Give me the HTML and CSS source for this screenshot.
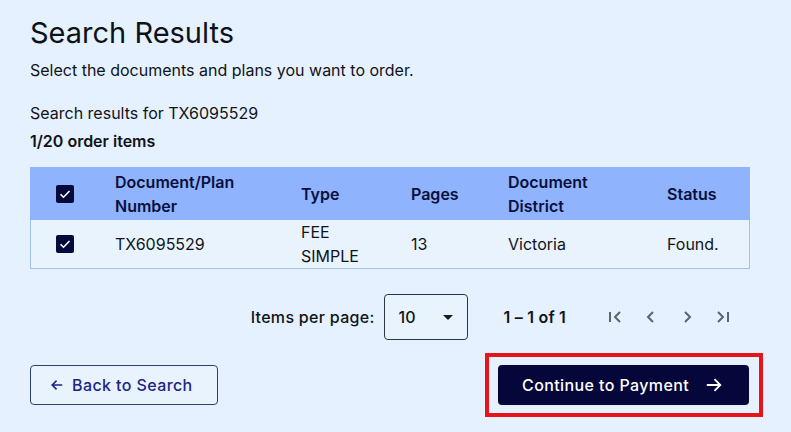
FILE: index.html
```html
<!DOCTYPE html>
<html lang="en">
<head>
    <meta charset="UTF-8">
    <meta name="viewport" content="width=device-width, initial-scale=1.0">
    <title>Search Results</title>
    <link rel="stylesheet" href="styles.css">
</head>
<body>

    <div class="page">
        <h1 class="title">Search Results</h1>
        <p class="intro">Select the documents and plans you want to order.</p>

        <p class="query">Search results for TX6095529</p>
        <p class="count">1/20 order items</p>

        <div class="results">
            <div class="row head">
                <div class="cell check"><span class="box"><svg viewBox="0 0 18 18" width="18" height="18"><path d="M4.5 9.2l3 3 6-6.2" fill="none" stroke="#fff" stroke-width="1.6"/></svg></span></div>
                <div class="cell">Document/Plan<br>Number</div>
                <div class="cell">Type</div>
                <div class="cell">Pages</div>
                <div class="cell">Document<br>District</div>
                <div class="cell">Status</div>
            </div>
            <div class="row item">
                <div class="cell check"><span class="box"><svg viewBox="0 0 18 18" width="18" height="18"><path d="M4.5 9.2l3 3 6-6.2" fill="none" stroke="#fff" stroke-width="1.6"/></svg></span></div>
                <div class="cell">TX6095529</div>
                <div class="cell">FEE<br>SIMPLE</div>
                <div class="cell">13</div>
                <div class="cell">Victoria</div>
                <div class="cell">Found.</div>
            </div>
        </div>

        <div class="paginator">
            <span class="per-page">Items per page:</span>
            <div class="select">
                <span>10</span>
                <svg viewBox="0 0 10 5" width="10" height="5"><path d="M0 0h10L5 5z" fill="#1a1a1a"/></svg>
            </div>
            <span class="range">1 – 1 of 1</span>
            <div class="pager">
                <svg viewBox="0 0 24 24" width="24" height="24"><path d="M7 7v10M17 7l-5 5 5 5" fill="none" stroke="#5d6470" stroke-width="2"/></svg>
                <svg viewBox="0 0 24 24" width="24" height="24"><path d="M14 7l-5 5 5 5" fill="none" stroke="#5d6470" stroke-width="2"/></svg>
                <svg viewBox="0 0 24 24" width="24" height="24"><path d="M10 7l5 5-5 5" fill="none" stroke="#5d6470" stroke-width="2"/></svg>
                <svg viewBox="0 0 24 24" width="24" height="24"><path d="M17 7v10M7 7l5 5-5 5" fill="none" stroke="#5d6470" stroke-width="2"/></svg>
            </div>
        </div>

        <div class="actions">
            <button class="btn back">
                <svg viewBox="0 0 16 16" width="14" height="14"><path d="M14 8H2.5M7.5 3L2.5 8l5 5" fill="none" stroke="#1d2484" stroke-width="1.8"/></svg>
                Back to Search
            </button>
            <div class="focus-ring">
                <button class="btn next">
                    Continue to Payment
                    <svg viewBox="0 0 20 20" width="18" height="18"><path d="M2 10h15M10.5 3.5L17 10l-6.5 6.5" fill="none" stroke="#fff" stroke-width="2"/></svg>
                </button>
            </div>
        </div>
    </div>

</body>
</html>
```

FILE: styles.css
```css
* {
    margin: 0;
    padding: 0;
    box-sizing: border-box;
}

body {
    font-family: 'Inter', 'Noto Sans', sans-serif;
    background-color: #e5f1fe;
    color: #111318;
    width: 791px;
    height: 432px;
    overflow: hidden;
}

.page {
    padding: 14px 41px 0 30px;
}

.title {
    font-size: 29px;
    font-weight: 400;
    line-height: 38px;
    color: #0e1118;
}

.intro {
    font-size: 16px;
    line-height: 22px;
    margin-top: 7px;
}

.query {
    font-size: 16px;
    line-height: 22px;
    margin-top: 21px;
}

.count {
    font-size: 16px;
    font-weight: 600;
    line-height: 22px;
    margin-top: 6px;
}

.results {
    margin-top: 15px;
    border: 1px solid #9fc2ec;
    border-top: none;
}

.row {
    display: grid;
    grid-template-columns: 68px 186px 110px 97px 159px 1fr;
    align-items: center;
}

.head {
    background-color: #8fb3fd;
    height: 53px;
    color: #0b0f3c;
    font-weight: 600;
    margin: 0 -1px;
    padding: 0 1px;
}

.item {
    background-color: #e8f3fe;
    height: 48px;
}

.cell {
    font-size: 16px;
    line-height: 24px;
    padding-left: 16px;
}

.check {
    padding-left: 25px;
}

.box {
    display: block;
    width: 18px;
    height: 18px;
    background-color: #07093a;
    border-radius: 2px;
}

.box svg {
    display: block;
}

.paginator {
    display: flex;
    align-items: center;
    justify-content: flex-end;
    margin-top: 25px;
    font-size: 16px;
    height: 46px;
}

.per-page {
    font-weight: 500;
    letter-spacing: 0.3px;
    margin-right: 9px;
}

.select {
    width: 84px;
    height: 46px;
    border: 1px solid #2d3444;
    border-radius: 4px;
    display: flex;
    align-items: center;
    justify-content: space-between;
    padding: 0 14px 0 14px;
    font-weight: 500;
    background-color: #e9f3fe;
}

.range {
    font-weight: 600;
    margin-left: 36px;
    margin-right: 37px;
    letter-spacing: 0.2px;
}

.pager {
    display: flex;
    gap: 12px;
    margin-right: 15px;
}

.pager svg {
    display: block;
}

.actions {
    display: flex;
    justify-content: space-between;
    align-items: center;
    margin-top: 13px;
}

.btn {
    font-family: 'Inter', 'Noto Sans', sans-serif;
    font-size: 16px;
    font-weight: 500;
    letter-spacing: 0.4px;
    height: 40px;
    border-radius: 4px;
    display: flex;
    align-items: center;
    cursor: pointer;
}

.back {
    width: 188px;
    background-color: #e8f3fe;
    color: #1d2484;
    border: 1px solid #2f3f6f;
    padding-left: 19px;
    gap: 8px;
}

.focus-ring {
    border: 4px solid #e8141c;
    padding: 8px 10px 8px 9px;
    margin-right: -13px;
}

.next {
    width: 251px;
    background-color: #05063a;
    color: #fff;
    border: none;
    padding-left: 24px;
    gap: 16px;
}
```
